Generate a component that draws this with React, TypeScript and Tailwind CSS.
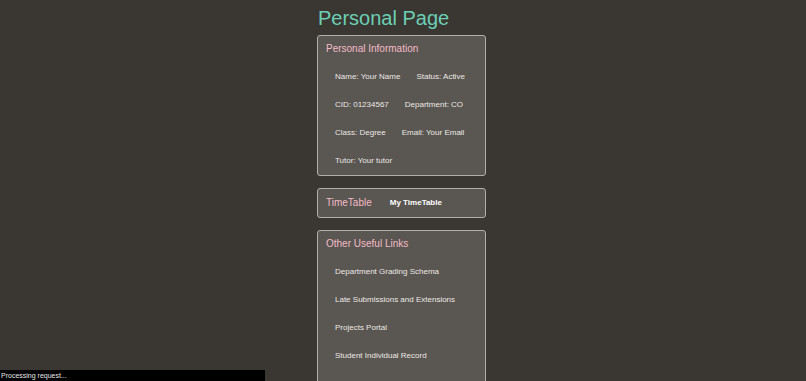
import React from "react";

const font = { fontFamily: '"Liberation Sans", Arial, sans-serif' };

function Card({ children }: { children: React.ReactNode }) {
  return (
    <div className="border border-[#b3aea9] rounded-[3px] bg-[#5a5651] px-2">{children}</div>
  );
}

export default function App() {
  const info = [
    ["Name: Your Name", "Status: Active"],
    ["CID: 01234567", "Department: CO"],
    ["Class: Degree", "Email: Your Email"],
    ["Tutor: Your tutor"],
  ];
  const links = [
    "Department Grading Schema",
    "Late Submissions and Extensions",
    "Projects Portal",
    "Student Individual Record",
  ];
  return (
    <div className="relative h-screen overflow-hidden bg-[#3a3631]" style={font}>
      <div className="w-[169px] ml-[317px] flex flex-col">
        <h1 className="text-[20px] leading-[24px] text-[#6ccfb5] pt-[6px] pb-[5px] pl-[1px]">Personal Page</h1>
        <Card>
          <h2 className="text-[10px] leading-[14px] text-[#f3bcc8] pt-[6px] mb-[7px]">Personal Information</h2>
          <div className="pl-[9px] flex flex-col">
            {info.map((row, i) => (
              <div key={i} className="h-[28px] flex items-center gap-[16px] text-[8px] text-[#ece9e6]">
                {row.map((t) => (
                  <span key={t}>{t}</span>
                ))}
              </div>
            ))}
          </div>
        </Card>
        <div className="h-[12px]" />
        <Card>
          <div className="h-[28px] flex items-center gap-[18px]">
            <h2 className="text-[10px] leading-[14px] text-[#f3bcc8]">TimeTable</h2>
            <span className="text-[8px] font-bold text-white">My TimeTable</span>
          </div>
        </Card>
        <div className="h-[12px]" />
        <Card>
          <h2 className="text-[10px] leading-[14px] text-[#f3bcc8] pt-[6px] mb-[7px]">Other Useful Links</h2>
          <div className="pl-[9px] pb-[40px] flex flex-col">
            {links.map((t) => (
              <div key={t} className="h-[28px] flex items-center text-[8px] text-[#ece9e6]">
                {t}
              </div>
            ))}
          </div>
        </Card>
      </div>
      <div className="absolute left-0 bottom-0 w-[265px] h-[11px] bg-black flex items-center">
        <span className="text-[7px] leading-[11px] text-[#e6e6e6] pl-[1px]">Processing request...</span>
      </div>
    </div>
  );
}
